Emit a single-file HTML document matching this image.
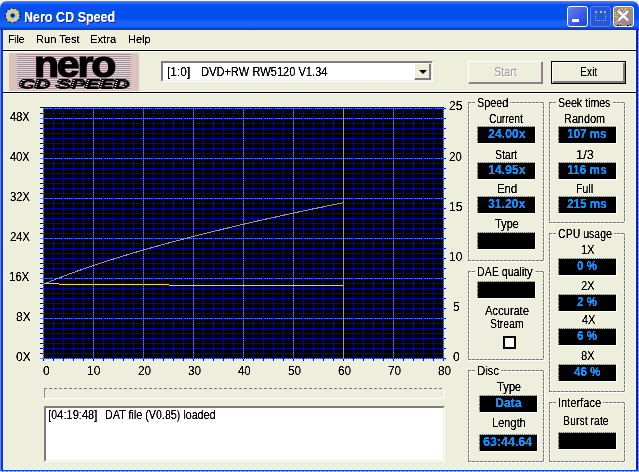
<!DOCTYPE html><html><head><meta charset="utf-8"><title>Nero CD Speed</title><style>
*{box-sizing:border-box;margin:0;padding:0}
html,body{width:639px;height:472px;overflow:hidden;background:#EEEEDD}
body{font-family:"Liberation Sans",sans-serif;font-size:12px;color:#000;position:relative}
.a{position:absolute;white-space:nowrap}
.t,.v,.m,.h{filter:url(#th);position:absolute;white-space:pre;transform-origin:0 0;will-change:transform}
.t{font-size:12px;line-height:14px;height:14px}
.v{font-size:13px;line-height:15px;height:15px;font-weight:bold;color:#1490FF}
.m{font-size:11px;line-height:13px;height:13px}
.h{font-size:14px;line-height:16px;height:16px;font-weight:bold;color:#fff;text-shadow:1px 1px 0 #0828A0}
.gw{position:absolute;border:1px solid #fff}
.gd{position:absolute;background:repeating-linear-gradient(to right,#886C88 0,#886C88 3px,#B4D8AC 3px,#B4D8AC 4px) top/100% 1px no-repeat,repeating-linear-gradient(to right,#886C88 0,#886C88 3px,#B4D8AC 3px,#B4D8AC 4px) bottom/100% 1px no-repeat,repeating-linear-gradient(to bottom,#886C88 0,#886C88 3px,#B4D8AC 3px,#B4D8AC 4px) left/1px 100% no-repeat,repeating-linear-gradient(to bottom,#886C88 0,#886C88 3px,#B4D8AC 3px,#B4D8AC 4px) right/1px 100% no-repeat}
.gl{position:absolute;background:#EEEEDD;height:13px}
.vb{position:absolute;background:linear-gradient(#fff,#fff) bottom/100% 1px no-repeat,linear-gradient(#fff,#fff) right/1px 100% no-repeat,repeating-linear-gradient(to right,#B4D8AC 0,#B4D8AC 1px,#886C88 1px,#886C88 2px) top/100% 1px no-repeat,repeating-linear-gradient(to bottom,#886C88 0,#886C88 3px,#B4D8AC 3px,#B4D8AC 4px) left/1px 100% no-repeat,#000}
.pb{position:absolute;background:linear-gradient(#fff,#fff) bottom/100% 1px no-repeat,linear-gradient(#fff,#fff) right/1px 100% no-repeat,repeating-linear-gradient(to right,#886C88 0,#886C88 3px,#EEEEDD 3px,#EEEEDD 5px) top/100% 1px no-repeat,linear-gradient(#9C8498,#9C8498) left/1px 100% no-repeat}
</style></head><body><svg width="0" height="0" style="position:absolute"><filter id="th" x="0" y="0" width="100%" height="100%" color-interpolation-filters="sRGB"><feComponentTransfer><feFuncA type="table" tableValues="0 0 0.55 1 1 1"/></feComponentTransfer></filter></svg>
<div class="a" style="left:0;top:0;width:639px;height:1px;background:#F4F4E8"></div>
<div class="a" style="left:0;top:1px;width:639px;height:29px;background:linear-gradient(to bottom,#5088FF 0,#2868FF 2px,#0850F0 4px,#0050EC 9px,#0050EC 18px,#1460F8 20px,#1864FC 25px,#0848E0 27px,#0034C8 29px);border-radius:7px 7px 0 0"></div>
<div class="a" style="left:0;top:30px;width:1px;height:442px;background:#7484FF"></div>
<div class="a" style="left:1px;top:30px;width:2px;height:442px;background:#0038F0"></div>
<div class="a" style="left:3px;top:30px;width:1px;height:440px;background:#FBF6E2"></div>
<div class="a" style="left:635px;top:30px;width:1px;height:440px;background:#FBF6E2"></div>
<div class="a" style="left:636px;top:30px;width:2px;height:442px;background:#0024C8"></div>
<div class="a" style="left:638px;top:30px;width:1px;height:442px;background:repeating-linear-gradient(to bottom,#7080F8 0,#7080F8 2px,#B8A0E0 2px,#B8A0E0 4px)"></div>
<div class="a" style="left:3px;top:469px;width:633px;height:1px;background:#FBF6E2"></div>
<div class="a" style="left:1px;top:470px;width:637px;height:1px;background:#0040F0"></div>
<div class="a" style="left:0;top:471px;width:639px;height:1px;background:repeating-linear-gradient(to right,#C4E098 0,#C4E098 2px,#7C84FF 2px,#7C84FF 4px)"></div>
<svg class="a" style="left:5px;top:8px" width="16" height="16" viewBox="0 0 16 16"><circle cx="7.7" cy="7.5" r="7.2" fill="#C4CCB4" stroke="#222" stroke-width="1.2" stroke-dasharray="2.2 2"/><path d="M2.3 12.7 L13 2.6" stroke="#F0D818" stroke-width="1.5"/><circle cx="7.7" cy="7.6" r="2.4" fill="#1048E0"/><circle cx="7.7" cy="7.6" r="1" fill="#000"/></svg>
<div class="h" style="left:24.11px;top:9px;transform:scaleX(0.895)">Nero CD Speed</div>
<div class="a" style="left:567px;top:6px;width:21px;height:21px;border:1px solid #fff;border-radius:3px;background:linear-gradient(135deg,#6A84F4,#3A5CE8 55%,#1E46D8)"><div class="a" style="left:4px;top:12px;width:7px;height:3px;background:#fff"></div></div>
<div class="a" style="left:590px;top:6px;width:21px;height:21px;border:1px solid #5A80F0;border-radius:3px;background:#2456E0"><div class="a" style="left:4px;top:4px;width:11px;height:10px;border:1px dotted #8CA8E8;border-top:2px dotted #C8D060"></div></div>
<div class="a" style="left:613px;top:6px;width:21px;height:21px;border:1px solid #fff;border-radius:3px;background:#9C8890;overflow:hidden"><svg class="a" style="left:0;top:0" width="19" height="19"><path d="M7 1h1v1h-1zM11 1h1v1h-1zM13 1h1v1h-1zM16 1h1v1h-1zM5 2h1v1h-1zM8 2h1v1h-1zM10 2h1v1h-1zM4 3h1v1h-1zM11 3h1v1h-1zM3 4h1v1h-1zM9 4h1v1h-1zM13 4h1v1h-1zM1 5h1v1h-1zM4 5h1v1h-1zM6 5h1v1h-1zM11 5h1v1h-1zM5 6h1v1h-1zM9 6h1v1h-1zM1 7h1v1h-1zM3 7h1v1h-1zM12 7h1v1h-1zM8 8h1v1h-1zM1 9h1v1h-1zM3 9h1v1h-1zM11 9h1v1h-1zM2 10h1v1h-1zM9 10h1v1h-1zM5 11h1v1h-1zM3 13h1v1h-1zM5 13h1v1h-1zM2 14h1v1h-1zM1 15h1v1h-1zM3 16h1v1h-1zM6 16h1v1h-1z" fill="#F4E83C" shape-rendering="crispEdges"/><path d="M4.5 4 L14 13.5 M14 4 L4.5 13.5" stroke="#fff" stroke-width="2.2"/><path d="M3 18h2M6 18h1M13 18h2M16 17h1" stroke="#000" stroke-width="1" shape-rendering="crispEdges"/></svg></div>
<div class="m" style="left:7.86px;top:33px;transform:scaleX(0.935)">File</div>
<div class="m" style="left:35.59px;top:33px;transform:scaleX(1.007)">Run Test</div>
<div class="m" style="left:90.48px;top:33px;transform:scaleX(1.022)">Extra</div>
<div class="m" style="left:128.01px;top:33px;transform:scaleX(0.988)">Help</div>
<div class="a" style="left:4px;top:49px;width:631px;height:1px;background:#fff"></div>
<div class="a" style="left:4px;top:91px;width:631px;height:1px;background:#F8F8E6"></div>
<div class="a" style="left:3px;top:50px;width:633px;height:1px;background:#000"></div>
<div class="a" style="left:3px;top:51px;width:633px;height:1px;background:#fff"></div>
<div class="a" style="left:3px;top:92px;width:633px;height:1px;background:#000"></div>
<div class="a" style="left:3px;top:93px;width:633px;height:1px;background:#fff"></div>
<div class="a" style="left:9px;top:53px;width:130px;height:38px;background:#D8C4BC"></div>
<div class="a" style="left:17px;top:54px;width:114px;height:36px;background:repeating-linear-gradient(to bottom,#A8949E 0,#A8949E 1px,#F0CCD2 1px,#F0CCD2 2px)"></div>
<div class="a" style="left:33px;top:44px;width:82px;font-weight:bold;font-size:37px;line-height:41px;letter-spacing:-2px;color:#000;-webkit-text-stroke:1.2px #000;text-align:center;transform:scaleX(1.11);transform-origin:50% 0;will-change:transform">nero</div>
<div class="a" style="left:17px;top:77px;width:113px;height:13px;font-weight:bold;font-style:italic;font-size:13px;line-height:13px;color:#000;-webkit-text-fill-color:transparent;background:repeating-linear-gradient(to bottom,#000 0,#000 1px,#FFF4F6 1px,#FFF4F6 2px);-webkit-background-clip:text;background-clip:text;-webkit-text-stroke:.7px #000;text-shadow:1px 1px 0 #000;text-align:center;transform:scaleX(1.66);transform-origin:50% 50%;will-change:transform">CD SPEED</div>
<div class="a" style="left:161px;top:61px;width:272px;height:21px;background:#fff;border:1px solid;border-color:#857880 #fff #fff #857880"></div>
<div class="a" style="left:162px;top:62px;width:270px;height:19px;border:1px solid;border-color:#857880 #EEEEDD #EEEEDD #857880"></div>
<div class="t" style="left:167.45px;top:65px;transform:scaleX(1.002)">[1:0]</div>
<div class="t" style="left:200.67px;top:65px;transform:scaleX(0.926)">DVD+RW RW5120 V1.34</div>
<div class="a" style="left:414px;top:63px;width:17px;height:17px;background:#EEEEDD;border:1px solid;border-color:#fff #857880 #857880 #fff;box-shadow:inset -1px -1px 0 #857880"><div class="a" style="left:4px;top:6px;width:0;height:0;border-left:4px solid transparent;border-right:4px solid transparent;border-top:4px solid #000"></div></div>
<div class="a" style="left:468px;top:61px;width:75px;height:23px;border:1px solid;border-color:#fff #908088 #908088 #fff;box-shadow:inset -1px -1px 0 #908088"></div>
<div class="t" style="left:493.95px;top:65px;transform:scaleX(0.897);color:#A8A0A8;text-shadow:1px 1px 0 #fff">Start</div>
<div class="a" style="left:551px;top:61px;width:75px;height:23px;border:1px solid #000"></div>
<div class="a" style="left:552px;top:62px;width:73px;height:21px;border:1px solid;border-color:#fff #857880 #857880 #fff;box-shadow:inset -1px -1px 0 #857880"></div>
<div class="t" style="left:579.74px;top:65px;transform:scaleX(0.858)">Exit</div>
<svg class="a" style="left:0;top:0" width="639" height="472" shape-rendering="crispEdges"><rect x="43" y="107" width="401" height="252" fill="#000"/><rect x="40" y="107" width="404" height="1" fill="#0000A8"/><rect x="40" y="358" width="404" height="1" fill="#5C80F0"/><rect x="40" y="353" width="404" height="1" fill="#0000A8"/><rect x="40" y="348" width="404" height="1" fill="#0000A8"/><rect x="40" y="343" width="404" height="1" fill="#0000A8"/><rect x="40" y="338" width="404" height="1" fill="#0000A8"/><rect x="40" y="333" width="404" height="1" fill="#0000A8"/><rect x="40" y="328" width="404" height="1" fill="#0000A8"/><rect x="40" y="323" width="404" height="1" fill="#0000A8"/><rect x="40" y="318" width="404" height="1" fill="#5C80F0"/><rect x="40" y="313" width="404" height="1" fill="#0000A8"/><rect x="40" y="308" width="404" height="1" fill="#0000A8"/><rect x="40" y="303" width="404" height="1" fill="#0000A8"/><rect x="40" y="298" width="404" height="1" fill="#0000A8"/><rect x="40" y="293" width="404" height="1" fill="#0000A8"/><rect x="40" y="288" width="404" height="1" fill="#0000A8"/><rect x="40" y="283" width="404" height="1" fill="#0000A8"/><rect x="40" y="278" width="404" height="1" fill="#5C80F0"/><rect x="40" y="273" width="404" height="1" fill="#0000A8"/><rect x="40" y="268" width="404" height="1" fill="#0000A8"/><rect x="40" y="263" width="404" height="1" fill="#0000A8"/><rect x="40" y="258" width="404" height="1" fill="#0000A8"/><rect x="40" y="253" width="404" height="1" fill="#0000A8"/><rect x="40" y="248" width="404" height="1" fill="#0000A8"/><rect x="40" y="243" width="404" height="1" fill="#0000A8"/><rect x="40" y="238" width="404" height="1" fill="#5C80F0"/><rect x="40" y="233" width="404" height="1" fill="#0000A8"/><rect x="40" y="228" width="404" height="1" fill="#0000A8"/><rect x="40" y="223" width="404" height="1" fill="#0000A8"/><rect x="40" y="218" width="404" height="1" fill="#0000A8"/><rect x="40" y="213" width="404" height="1" fill="#0000A8"/><rect x="40" y="208" width="404" height="1" fill="#0000A8"/><rect x="40" y="203" width="404" height="1" fill="#0000A8"/><rect x="40" y="198" width="404" height="1" fill="#5C80F0"/><rect x="40" y="193" width="404" height="1" fill="#0000A8"/><rect x="40" y="188" width="404" height="1" fill="#0000A8"/><rect x="40" y="183" width="404" height="1" fill="#0000A8"/><rect x="40" y="178" width="404" height="1" fill="#0000A8"/><rect x="40" y="173" width="404" height="1" fill="#0000A8"/><rect x="40" y="168" width="404" height="1" fill="#0000A8"/><rect x="40" y="163" width="404" height="1" fill="#0000A8"/><rect x="40" y="158" width="404" height="1" fill="#5C80F0"/><rect x="40" y="153" width="404" height="1" fill="#0000A8"/><rect x="40" y="148" width="404" height="1" fill="#0000A8"/><rect x="40" y="143" width="404" height="1" fill="#0000A8"/><rect x="40" y="138" width="404" height="1" fill="#0000A8"/><rect x="40" y="133" width="404" height="1" fill="#0000A8"/><rect x="40" y="128" width="404" height="1" fill="#0000A8"/><rect x="40" y="123" width="404" height="1" fill="#0000A8"/><rect x="40" y="118" width="404" height="1" fill="#5C80F0"/><rect x="40" y="113" width="404" height="1" fill="#0000A8"/><rect x="43" y="108" width="401" height="1" fill="#0000A8"/><rect x="444" y="358" width="2" height="1" fill="#0000A8"/><rect x="444" y="348" width="2" height="1" fill="#0000A8"/><rect x="444" y="338" width="2" height="1" fill="#0000A8"/><rect x="444" y="328" width="2" height="1" fill="#0000A8"/><rect x="444" y="318" width="2" height="1" fill="#0000A8"/><rect x="444" y="308" width="2" height="1" fill="#0000A8"/><rect x="444" y="298" width="2" height="1" fill="#0000A8"/><rect x="444" y="288" width="2" height="1" fill="#0000A8"/><rect x="444" y="278" width="2" height="1" fill="#0000A8"/><rect x="444" y="268" width="2" height="1" fill="#0000A8"/><rect x="444" y="258" width="2" height="1" fill="#0000A8"/><rect x="444" y="248" width="2" height="1" fill="#0000A8"/><rect x="444" y="238" width="2" height="1" fill="#0000A8"/><rect x="444" y="228" width="2" height="1" fill="#0000A8"/><rect x="444" y="218" width="2" height="1" fill="#0000A8"/><rect x="444" y="208" width="2" height="1" fill="#0000A8"/><rect x="444" y="198" width="2" height="1" fill="#0000A8"/><rect x="444" y="188" width="2" height="1" fill="#0000A8"/><rect x="444" y="178" width="2" height="1" fill="#0000A8"/><rect x="444" y="168" width="2" height="1" fill="#0000A8"/><rect x="444" y="158" width="2" height="1" fill="#0000A8"/><rect x="444" y="148" width="2" height="1" fill="#0000A8"/><rect x="444" y="138" width="2" height="1" fill="#0000A8"/><rect x="444" y="128" width="2" height="1" fill="#0000A8"/><rect x="444" y="118" width="2" height="1" fill="#0000A8"/><rect x="444" y="108" width="2" height="1" fill="#0000A8"/><rect x="43" y="358" width="401" height="1" fill="#0838F0"/><line x1="43" y1="358.5" x2="444" y2="358.5" stroke="#6488F8" stroke-width="1" stroke-dasharray="1 1"/><rect x="43" y="318" width="401" height="1" fill="#0838F0"/><line x1="43" y1="318.5" x2="444" y2="318.5" stroke="#6488F8" stroke-width="1" stroke-dasharray="1 1"/><rect x="43" y="278" width="401" height="1" fill="#0838F0"/><line x1="43" y1="278.5" x2="444" y2="278.5" stroke="#6488F8" stroke-width="1" stroke-dasharray="1 1"/><rect x="43" y="238" width="401" height="1" fill="#0838F0"/><line x1="43" y1="238.5" x2="444" y2="238.5" stroke="#6488F8" stroke-width="1" stroke-dasharray="1 1"/><rect x="43" y="198" width="401" height="1" fill="#0838F0"/><line x1="43" y1="198.5" x2="444" y2="198.5" stroke="#6488F8" stroke-width="1" stroke-dasharray="1 1"/><rect x="43" y="158" width="401" height="1" fill="#0838F0"/><line x1="43" y1="158.5" x2="444" y2="158.5" stroke="#6488F8" stroke-width="1" stroke-dasharray="1 1"/><rect x="43" y="118" width="401" height="1" fill="#0838F0"/><line x1="43" y1="118.5" x2="444" y2="118.5" stroke="#6488F8" stroke-width="1" stroke-dasharray="1 1"/><rect x="43" y="108" width="401" height="1" fill="#0838F0"/><line x1="43" y1="108.5" x2="444" y2="108.5" stroke="#6488F8" stroke-width="1" stroke-dasharray="1 1"/><rect x="43" y="108" width="1" height="253" fill="#0000A8"/><rect x="53" y="108" width="1" height="253" fill="#0000A8"/><rect x="63" y="108" width="1" height="253" fill="#0000A8"/><rect x="73" y="108" width="1" height="253" fill="#0000A8"/><rect x="83" y="108" width="1" height="253" fill="#0000A8"/><rect x="93" y="108" width="1" height="253" fill="#0000A8"/><rect x="103" y="108" width="1" height="253" fill="#0000A8"/><rect x="113" y="108" width="1" height="253" fill="#0000A8"/><rect x="123" y="108" width="1" height="253" fill="#0000A8"/><rect x="133" y="108" width="1" height="253" fill="#0000A8"/><rect x="143" y="108" width="1" height="253" fill="#0000A8"/><rect x="153" y="108" width="1" height="253" fill="#0000A8"/><rect x="163" y="108" width="1" height="253" fill="#0000A8"/><rect x="173" y="108" width="1" height="253" fill="#0000A8"/><rect x="183" y="108" width="1" height="253" fill="#0000A8"/><rect x="193" y="108" width="1" height="253" fill="#0000A8"/><rect x="203" y="108" width="1" height="253" fill="#0000A8"/><rect x="213" y="108" width="1" height="253" fill="#0000A8"/><rect x="223" y="108" width="1" height="253" fill="#0000A8"/><rect x="233" y="108" width="1" height="253" fill="#0000A8"/><rect x="243" y="108" width="1" height="253" fill="#0000A8"/><rect x="253" y="108" width="1" height="253" fill="#0000A8"/><rect x="263" y="108" width="1" height="253" fill="#0000A8"/><rect x="273" y="108" width="1" height="253" fill="#0000A8"/><rect x="283" y="108" width="1" height="253" fill="#0000A8"/><rect x="293" y="108" width="1" height="253" fill="#0000A8"/><rect x="303" y="108" width="1" height="253" fill="#0000A8"/><rect x="313" y="108" width="1" height="253" fill="#0000A8"/><rect x="323" y="108" width="1" height="253" fill="#0000A8"/><rect x="333" y="108" width="1" height="253" fill="#0000A8"/><rect x="343" y="108" width="1" height="253" fill="#0000A8"/><rect x="353" y="108" width="1" height="253" fill="#0000A8"/><rect x="363" y="108" width="1" height="253" fill="#0000A8"/><rect x="373" y="108" width="1" height="253" fill="#0000A8"/><rect x="383" y="108" width="1" height="253" fill="#0000A8"/><rect x="393" y="108" width="1" height="253" fill="#0000A8"/><rect x="403" y="108" width="1" height="253" fill="#0000A8"/><rect x="413" y="108" width="1" height="253" fill="#0000A8"/><rect x="423" y="108" width="1" height="253" fill="#0000A8"/><rect x="433" y="108" width="1" height="253" fill="#0000A8"/><rect x="443" y="108" width="1" height="253" fill="#0000A8"/><rect x="43" y="108" width="1" height="251" fill="#0838F0"/><line x1="43.5" y1="108" x2="43.5" y2="359" stroke="#6488F8" stroke-width="1" stroke-dasharray="1 1"/><rect x="93" y="108" width="1" height="251" fill="#0838F0"/><line x1="93.5" y1="108" x2="93.5" y2="359" stroke="#6488F8" stroke-width="1" stroke-dasharray="1 1"/><rect x="143" y="108" width="1" height="251" fill="#0838F0"/><line x1="143.5" y1="108" x2="143.5" y2="359" stroke="#6488F8" stroke-width="1" stroke-dasharray="1 1"/><rect x="193" y="108" width="1" height="251" fill="#0838F0"/><line x1="193.5" y1="108" x2="193.5" y2="359" stroke="#6488F8" stroke-width="1" stroke-dasharray="1 1"/><rect x="243" y="108" width="1" height="251" fill="#0838F0"/><line x1="243.5" y1="108" x2="243.5" y2="359" stroke="#6488F8" stroke-width="1" stroke-dasharray="1 1"/><rect x="293" y="108" width="1" height="251" fill="#0838F0"/><line x1="293.5" y1="108" x2="293.5" y2="359" stroke="#6488F8" stroke-width="1" stroke-dasharray="1 1"/><rect x="343" y="108" width="1" height="251" fill="#0838F0"/><line x1="343.5" y1="108" x2="343.5" y2="359" stroke="#6488F8" stroke-width="1" stroke-dasharray="1 1"/><rect x="393" y="108" width="1" height="251" fill="#0838F0"/><line x1="393.5" y1="108" x2="393.5" y2="359" stroke="#6488F8" stroke-width="1" stroke-dasharray="1 1"/><rect x="443" y="108" width="1" height="251" fill="#0838F0"/><line x1="443.5" y1="108" x2="443.5" y2="359" stroke="#6488F8" stroke-width="1" stroke-dasharray="1 1"/><polyline points="44.5,283.8 45.5,283.3 46.5,282.9 47.5,282.5 48.5,282.1 49.5,281.7 50.5,281.3 51.5,280.9 52.5,280.5 53.5,280.1 54.5,279.7 55.5,279.3 56.5,278.9 57.5,278.5 58.5,278.1 59.5,277.7 60.5,277.3 61.5,277.0 62.5,276.6 63.5,276.2 64.5,275.8 65.5,275.4 66.5,275.1 67.5,274.7 68.5,274.3 69.5,273.9 70.5,273.6 71.5,273.2 72.5,272.8 73.5,272.5 74.5,272.1 75.5,271.8 76.5,271.4 77.5,271.0 78.5,270.7 79.5,270.3 80.5,270.0 81.5,269.6 82.5,269.3 83.5,268.9 84.5,268.6 85.5,268.2 86.5,267.9 87.5,267.5 88.5,267.2 89.5,266.8 90.5,266.5 91.5,266.2 92.5,265.8 93.5,265.5 94.5,265.2 95.5,264.8 96.5,264.5 97.5,264.2 98.5,263.8 99.5,263.5 100.5,263.2 101.5,262.8 102.5,262.5 103.5,262.2 104.5,261.9 105.5,261.5 106.5,261.2 107.5,260.9 108.5,260.6 109.5,260.3 110.5,259.9 111.5,259.6 112.5,259.3 113.5,259.0 114.5,258.7 115.5,258.4 116.5,258.1 117.5,257.8 118.5,257.4 119.5,257.1 120.5,256.8 121.5,256.5 122.5,256.2 123.5,255.9 124.5,255.6 125.5,255.3 126.5,255.0 127.5,254.7 128.5,254.4 129.5,254.1 130.5,253.8 131.5,253.5 132.5,253.2 133.5,252.9 134.5,252.6 135.5,252.3 136.5,252.0 137.5,251.7 138.5,251.4 139.5,251.1 140.5,250.9 141.5,250.6 142.5,250.3 143.5,250.0 144.5,249.7 145.5,249.4 146.5,249.1 147.5,248.8 148.5,248.6 149.5,248.3 150.5,248.0 151.5,247.7 152.5,247.4 153.5,247.1 154.5,246.9 155.5,246.6 156.5,246.3 157.5,246.0 158.5,245.8 159.5,245.5 160.5,245.2 161.5,244.9 162.5,244.6 163.5,244.4 164.5,244.1 165.5,243.8 166.5,243.6 167.5,243.3 168.5,243.0 169.5,242.7 170.5,242.5 171.5,242.2 172.5,241.9 173.5,241.7 174.5,241.4 175.5,241.1 176.5,240.9 177.5,240.6 178.5,240.3 179.5,240.1 180.5,239.8 181.5,239.5 182.5,239.3 183.5,239.0 184.5,238.8 185.5,238.5 186.5,238.2 187.5,238.0 188.5,237.7 189.5,237.5 190.5,237.2 191.5,236.9 192.5,236.7 193.5,236.4 194.5,236.2 195.5,235.9 196.5,235.7 197.5,235.4 198.5,235.2 199.5,234.9 200.5,234.7 201.5,234.4 202.5,234.2 203.5,233.9 204.5,233.7 205.5,233.4 206.5,233.2 207.5,232.9 208.5,232.7 209.5,232.4 210.5,232.2 211.5,231.9 212.5,231.7 213.5,231.4 214.5,231.2 215.5,230.9 216.5,230.7 217.5,230.4 218.5,230.2 219.5,230.0 220.5,229.7 221.5,229.5 222.5,229.2 223.5,229.0 224.5,228.7 225.5,228.5 226.5,228.3 227.5,228.0 228.5,227.8 229.5,227.5 230.5,227.3 231.5,227.1 232.5,226.8 233.5,226.6 234.5,226.4 235.5,226.1 236.5,225.9 237.5,225.6 238.5,225.4 239.5,225.2 240.5,224.9 241.5,224.7 242.5,224.5 243.5,224.2 244.5,224.0 245.5,223.8 246.5,223.5 247.5,223.3 248.5,223.1 249.5,222.9 250.5,222.6 251.5,222.4 252.5,222.2 253.5,221.9 254.5,221.7 255.5,221.5 256.5,221.3 257.5,221.0 258.5,220.8 259.5,220.6 260.5,220.3 261.5,220.1 262.5,219.9 263.5,219.7 264.5,219.4 265.5,219.2 266.5,219.0 267.5,218.8 268.5,218.5 269.5,218.3 270.5,218.1 271.5,217.9 272.5,217.7 273.5,217.4 274.5,217.2 275.5,217.0 276.5,216.8 277.5,216.5 278.5,216.3 279.5,216.1 280.5,215.9 281.5,215.7 282.5,215.5 283.5,215.2 284.5,215.0 285.5,214.8 286.5,214.6 287.5,214.4 288.5,214.1 289.5,213.9 290.5,213.7 291.5,213.5 292.5,213.3 293.5,213.1 294.5,212.9 295.5,212.6 296.5,212.4 297.5,212.2 298.5,212.0 299.5,211.8 300.5,211.6 301.5,211.4 302.5,211.1 303.5,210.9 304.5,210.7 305.5,210.5 306.5,210.3 307.5,210.1 308.5,209.9 309.5,209.7 310.5,209.5 311.5,209.3 312.5,209.0 313.5,208.8 314.5,208.6 315.5,208.4 316.5,208.2 317.5,208.0 318.5,207.8 319.5,207.6 320.5,207.4 321.5,207.2 322.5,207.0 323.5,206.8 324.5,206.6 325.5,206.3 326.5,206.1 327.5,205.9 328.5,205.7 329.5,205.5 330.5,205.3 331.5,205.1 332.5,204.9 333.5,204.7 334.5,204.5 335.5,204.3 336.5,204.1 337.5,203.9 338.5,203.7 339.5,203.5 340.5,203.3 341.5,203.1 342.5,202.9 343.5,202.7" fill="none" stroke="#A0949C" stroke-width="1"/><rect x="343" y="108" width="1" height="251" fill="#A0949C"/><rect x="44" y="283" width="15" height="1" fill="#F0D828"/><rect x="59" y="284" width="110" height="1" fill="#F0D828"/><rect x="169" y="285" width="174" height="1" fill="#F0D828"/></svg>
<div class="t" style="left:15.51px;top:350px;transform:scaleX(0.975)">0X</div>
<div class="t" style="left:15.51px;top:310px;transform:scaleX(0.975)">8X</div>
<div class="t" style="left:9.45px;top:270px;transform:scaleX(0.950)">16X</div>
<div class="t" style="left:9.94px;top:230px;transform:scaleX(0.927)">24X</div>
<div class="t" style="left:9.94px;top:190px;transform:scaleX(0.927)">32X</div>
<div class="t" style="left:10.17px;top:150px;transform:scaleX(0.916)">40X</div>
<div class="t" style="left:10.17px;top:110px;transform:scaleX(0.916)">48X</div>
<div class="t" style="left:452.52px;top:350px;transform:scaleX(0.957)">0</div>
<div class="t" style="left:452.52px;top:300px;transform:scaleX(0.957)">5</div>
<div class="t" style="left:448.61px;top:250px;transform:scaleX(0.992)">10</div>
<div class="t" style="left:448.59px;top:200px;transform:scaleX(1.013)">15</div>
<div class="t" style="left:449.12px;top:150px;transform:scaleX(0.952)">20</div>
<div class="t" style="left:449.11px;top:99px;transform:scaleX(0.971)">25</div>
<div class="t" style="left:42.53px;top:364px;transform:scaleX(0.939)">0</div>
<div class="t" style="left:87.40px;top:364px;transform:scaleX(1.000)">10</div>
<div class="t" style="left:137.92px;top:364px;transform:scaleX(0.960)">20</div>
<div class="t" style="left:187.92px;top:364px;transform:scaleX(0.960)">30</div>
<div class="t" style="left:238.16px;top:364px;transform:scaleX(0.941)">40</div>
<div class="t" style="left:287.92px;top:364px;transform:scaleX(0.960)">50</div>
<div class="t" style="left:337.92px;top:364px;transform:scaleX(0.960)">60</div>
<div class="t" style="left:387.92px;top:364px;transform:scaleX(0.960)">70</div>
<div class="t" style="left:437.92px;top:364px;transform:scaleX(0.960)">80</div>
<div class="pb" style="left:44px;top:388px;width:401px;height:11px"></div>
<div class="a" style="left:44px;top:406px;width:401px;height:56px;background:#fff;border:1px solid;border-color:#857880 #fff #fff #857880"></div>
<div class="a" style="left:45px;top:407px;width:399px;height:54px;border:1px solid;border-color:#857880 #EEEEDD #EEEEDD #857880"></div>
<div class="t" style="left:47.81px;top:408px;transform:scaleX(0.924)">[04:19:48]</div>
<div class="t" style="left:104.81px;top:408px;transform:scaleX(0.894)">DAT file (V0.85) loaded</div>
<div class="gw" style="left:469px;top:103px;width:76px;height:159px"></div>
<div class="gd" style="left:468px;top:102px;width:76px;height:159px"></div>
<div class="gl" style="left:475px;top:96px;width:35px"></div>
<div class="t" style="left:477.35px;top:96px;transform:scaleX(0.901)">Speed</div>
<div class="t" style="left:489.18px;top:112px;transform:scaleX(0.843)">Current</div>
<div class="vb" style="left:477px;top:126px;width:59px;height:18px"></div>
<div class="v" style="left:487.53px;top:126px;transform:scaleX(0.946)">24.00x</div>
<div class="t" style="left:495.06px;top:148px;transform:scaleX(0.877)">Start</div>
<div class="vb" style="left:477px;top:162px;width:59px;height:18px"></div>
<div class="v" style="left:487.59px;top:162px;transform:scaleX(0.945)">14.95x</div>
<div class="t" style="left:497.06px;top:182px;transform:scaleX(0.938)">End</div>
<div class="vb" style="left:477px;top:196px;width:59px;height:18px"></div>
<div class="v" style="left:487.77px;top:196px;transform:scaleX(0.938)">31.20x</div>
<div class="t" style="left:494.97px;top:217px;transform:scaleX(0.911)">Type</div>
<div class="vb" style="left:477px;top:232px;width:59px;height:18px"></div>
<div class="gw" style="left:550px;top:103px;width:76px;height:121px"></div>
<div class="gd" style="left:549px;top:102px;width:76px;height:121px"></div>
<div class="gl" style="left:556px;top:96px;width:57px"></div>
<div class="t" style="left:558.36px;top:96px;transform:scaleX(0.882)">Seek times</div>
<div class="t" style="left:563.89px;top:112px;transform:scaleX(0.906)">Random</div>
<div class="vb" style="left:558px;top:126px;width:59px;height:18px"></div>
<div class="v" style="left:567.43px;top:126px;transform:scaleX(0.898)">107 ms</div>
<div class="t" style="left:575.63px;top:148px;transform:scaleX(1.069)">1/3</div>
<div class="vb" style="left:558px;top:162px;width:59px;height:18px"></div>
<div class="v" style="left:567.41px;top:162px;transform:scaleX(0.914)">116 ms</div>
<div class="t" style="left:576.02px;top:182px;transform:scaleX(0.880)">Full</div>
<div class="vb" style="left:558px;top:196px;width:59px;height:18px"></div>
<div class="v" style="left:567.25px;top:196px;transform:scaleX(0.902)">215 ms</div>
<div class="gw" style="left:550px;top:234px;width:76px;height:159px"></div>
<div class="gd" style="left:549px;top:233px;width:76px;height:159px"></div>
<div class="gl" style="left:556px;top:227px;width:58px"></div>
<div class="t" style="left:558.36px;top:227px;transform:scaleX(0.878)">CPU usage</div>
<div class="t" style="left:581.29px;top:243px;transform:scaleX(0.906)">1X</div>
<div class="vb" style="left:558px;top:258px;width:59px;height:18px"></div>
<div class="v" style="left:577.05px;top:258px;transform:scaleX(0.893)">0 %</div>
<div class="t" style="left:581.34px;top:279px;transform:scaleX(0.916)">2X</div>
<div class="vb" style="left:558px;top:294px;width:59px;height:18px"></div>
<div class="v" style="left:577.05px;top:294px;transform:scaleX(0.893)">2 %</div>
<div class="t" style="left:581.57px;top:313px;transform:scaleX(0.900)">4X</div>
<div class="vb" style="left:558px;top:328px;width:59px;height:18px"></div>
<div class="v" style="left:577.05px;top:328px;transform:scaleX(0.893)">6 %</div>
<div class="t" style="left:581.34px;top:349px;transform:scaleX(0.916)">8X</div>
<div class="vb" style="left:558px;top:364px;width:59px;height:18px"></div>
<div class="v" style="left:574.48px;top:364px;transform:scaleX(0.893)">46 %</div>
<div class="gw" style="left:469px;top:272px;width:76px;height:89px"></div>
<div class="gd" style="left:468px;top:271px;width:76px;height:89px"></div>
<div class="gl" style="left:475px;top:265px;width:60px"></div>
<div class="t" style="left:476.92px;top:265px;transform:scaleX(0.883)">DAE quality</div>
<div class="vb" style="left:477px;top:281px;width:59px;height:18px"></div>
<div class="t" style="left:485.00px;top:304px;transform:scaleX(0.928)">Accurate</div>
<div class="t" style="left:490.27px;top:317px;transform:scaleX(0.867)">Stream</div>
<div class="a" style="left:503px;top:336px;width:13px;height:13px;background:#fff;border:2px solid #000"></div>
<div class="gw" style="left:469px;top:371px;width:76px;height:92px"></div>
<div class="gd" style="left:468px;top:370px;width:76px;height:92px"></div>
<div class="gl" style="left:475px;top:364px;width:26px"></div>
<div class="t" style="left:476.86px;top:364px;transform:scaleX(0.941)">Disc</div>
<div class="t" style="left:496.97px;top:380px;transform:scaleX(0.927)">Type</div>
<div class="vb" style="left:479px;top:395px;width:59px;height:18px"></div>
<div class="v" style="left:494.89px;top:395px;transform:scaleX(0.942)">Data</div>
<div class="t" style="left:492.08px;top:416px;transform:scaleX(0.917)">Length</div>
<div class="vb" style="left:479px;top:434px;width:59px;height:18px"></div>
<div class="v" style="left:483.22px;top:434px;transform:scaleX(0.960)">63:44.64</div>
<div class="gw" style="left:550px;top:403px;width:76px;height:60px"></div>
<div class="gd" style="left:549px;top:402px;width:76px;height:60px"></div>
<div class="gl" style="left:556px;top:396px;width:47px"></div>
<div class="t" style="left:557.58px;top:396px;transform:scaleX(0.924)">Interface</div>
<div class="t" style="left:562.82px;top:414px;transform:scaleX(0.877)">Burst rate</div>
<div class="vb" style="left:558px;top:432px;width:59px;height:18px"></div>
</body></html>
